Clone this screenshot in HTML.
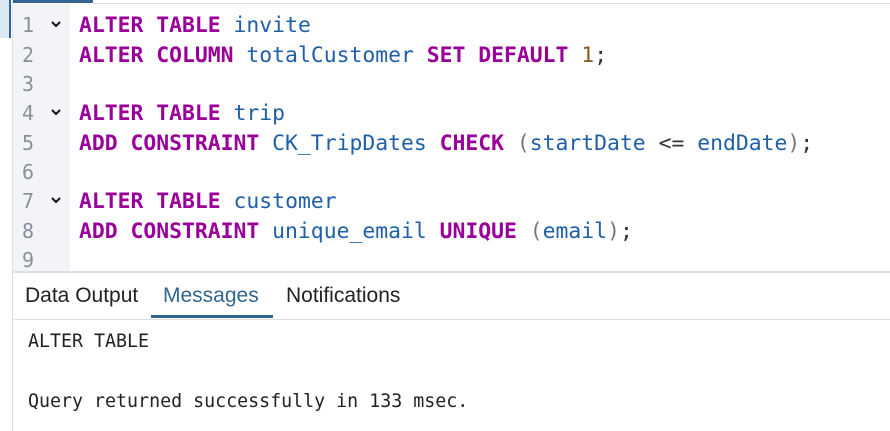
<!DOCTYPE html>
<html><head><style>
body{margin:0;width:890px;height:431px;background:#fff;position:relative;overflow:hidden;font-family:"DejaVu Sans Mono","Liberation Mono",monospace}
.strip{position:absolute;left:0;top:0;width:9px;height:38px;background:#dbe9f5}
.vline{position:absolute;left:9px;top:0;width:2px;height:38px;background:#326690}
.lborder{position:absolute;left:12px;top:0;width:1px;height:431px;background:#dde0e6}
.topbar{position:absolute;left:13px;top:0;width:80px;height:3px;background:#326690}
.topline{position:absolute;left:93px;top:3px;right:0;height:1px;background:#dde0e6}
.gutter{position:absolute;left:13px;top:4px;width:57px;height:268px;background:#f3f4f7}
.ln{position:absolute;left:13px;width:30px;text-align:center;color:#8a8f99;font-size:20px}
.fold{position:absolute;left:51px;width:10px;height:7px}
.code{position:absolute;left:79px;font-size:21.4px;white-space:pre;color:#1f5fa8}
.k{color:#990099;font-weight:bold}
.p{color:#777}
.o{color:#333}
.n{color:#8a5a1a}
.sep{position:absolute;left:13px;right:0;top:271px;height:2px;background:#dde0e6}
.tab{position:absolute;top:284px;font-family:"Liberation Sans",sans-serif;font-size:21px;color:#222}
.under{position:absolute;left:151px;top:315px;width:122px;height:3px;background:#326690}
.sep2{position:absolute;left:13px;right:0;top:319px;height:1px;background:#dde0e6}
.msg{position:absolute;left:28px;font-size:18.3px;color:#222;white-space:pre}
</style></head><body>
<div class="strip"></div><div class="vline"></div><div class="lborder"></div>
<div class="topbar"></div><div class="topline"></div>
<div class="gutter"></div>
<div class="ln" style="top:13px">1</div><svg class="fold" style="top:21px" viewBox="0 0 10 7"><path d="M1 1L5 5L9 1" stroke="#111" stroke-width="2" fill="none"/></svg>
<div class="ln" style="top:43px">2</div>
<div class="ln" style="top:72px">3</div>
<div class="ln" style="top:101px">4</div><svg class="fold" style="top:109px" viewBox="0 0 10 7"><path d="M1 1L5 5L9 1" stroke="#111" stroke-width="2" fill="none"/></svg>
<div class="ln" style="top:131px">5</div>
<div class="ln" style="top:160px">6</div>
<div class="ln" style="top:189px">7</div><svg class="fold" style="top:197px" viewBox="0 0 10 7"><path d="M1 1L5 5L9 1" stroke="#111" stroke-width="2" fill="none"/></svg>
<div class="ln" style="top:219px">8</div>
<div class="ln" style="top:248px">9</div>
<div class="code" style="top:13px"><span class="k">ALTER TABLE</span> invite</div>
<div class="code" style="top:43px"><span class="k">ALTER COLUMN</span> totalCustomer <span class="k">SET DEFAULT</span> <span class="n">1</span><span class="o">;</span></div>
<div class="code" style="top:101px"><span class="k">ALTER TABLE</span> trip</div>
<div class="code" style="top:131px"><span class="k">ADD CONSTRAINT</span> CK_TripDates <span class="k">CHECK</span> <span class="p">(</span>startDate <span class="o">&lt;=</span> endDate<span class="p">)</span><span class="o">;</span></div>
<div class="code" style="top:189px"><span class="k">ALTER TABLE</span> customer</div>
<div class="code" style="top:219px"><span class="k">ADD CONSTRAINT</span> unique_email <span class="k">UNIQUE</span> <span class="p">(</span>email<span class="p">)</span><span class="o">;</span></div>
<div class="sep"></div>
<div class="tab" style="left:25px">Data Output</div>
<div class="tab" style="left:163px;color:#326690">Messages</div>
<div class="tab" style="left:286px">Notifications</div>
<div class="under"></div><div class="sep2"></div>
<div class="msg" style="top:331px">ALTER TABLE</div>
<div class="msg" style="top:391px">Query returned successfully in 133 msec.</div>
</body></html>
